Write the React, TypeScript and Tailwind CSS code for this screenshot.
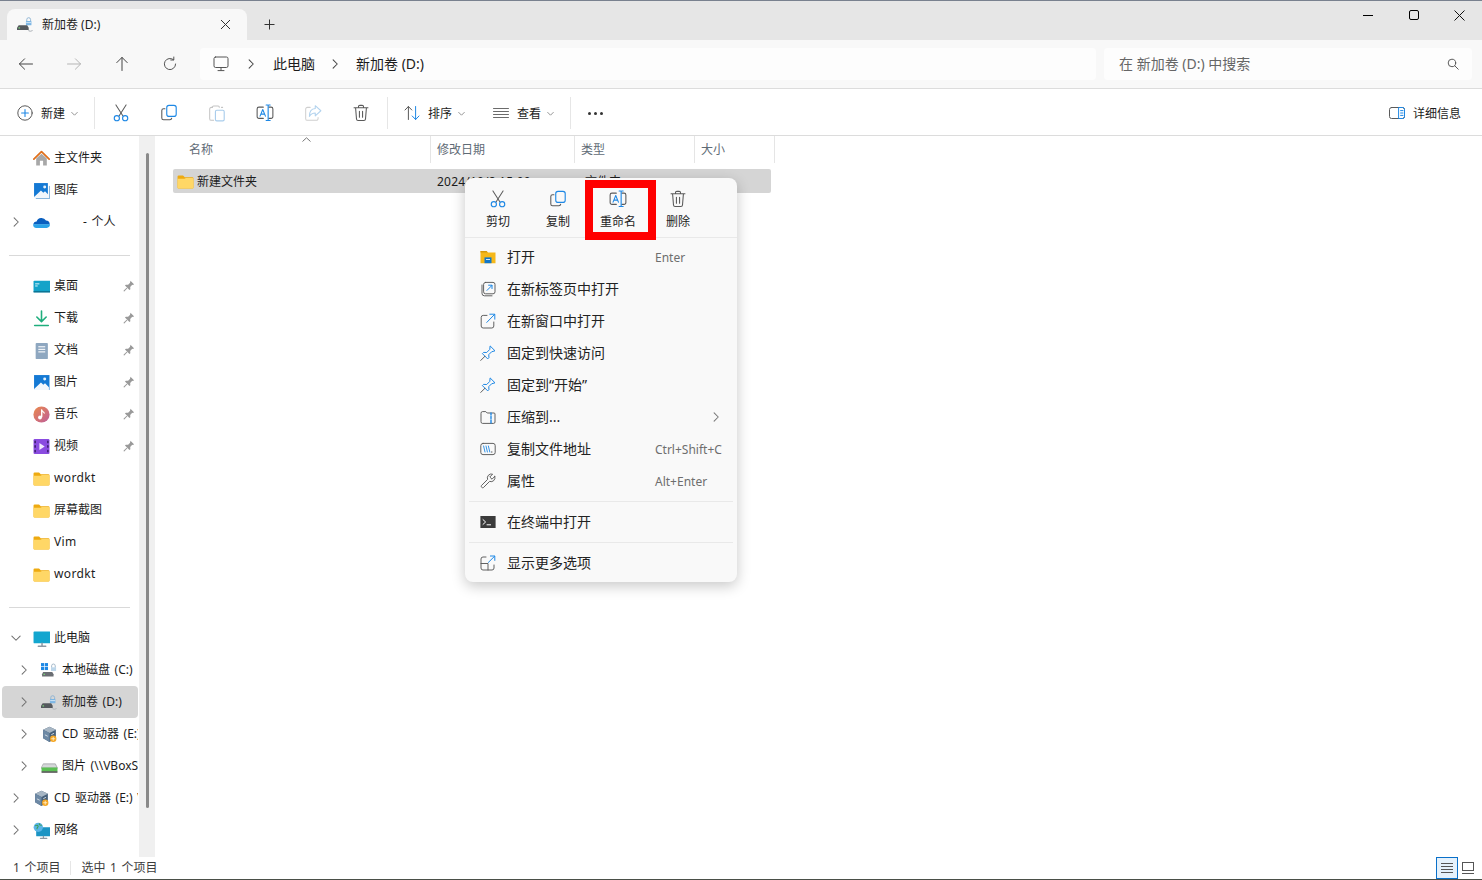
import type { ReactNode } from 'react'

const font = "font-['Noto_Sans','Noto_Sans_CJK_SC',sans-serif]"

function Ico({ s = 16, children, className = '' }: { s?: number; children: ReactNode; className?: string }) {
  return (
    <svg width={s} height={s} viewBox="0 0 16 16" fill="none" strokeLinecap="round" strokeLinejoin="round" className={`shrink-0 ${className}`}>
      {children}
    </svg>
  )
}

const G = '#5a5a5a'
const B = '#1e88e5'

const Chevron = ({ open = false, c = '#6e6e6e' }: { open?: boolean; c?: string }) => (
  <Ico s={12}>
    <path d={open ? 'M2.5 5.5 8 11 13.5 5.5' : 'M5.5 2.5 11 8 5.5 13.5'} stroke={c} strokeWidth="1.4" />
  </Ico>
)
const Caret = () => (
  <Ico s={9}>
    <path d="M3 6 8 11 13 6" stroke="#8a8a8a" strokeWidth="1.6" />
  </Ico>
)

const Cut = ({ s = 18 }: { s?: number }) => (
  <Ico s={s}>
    <path d="M3.5 .8 9.6 10.4M12.5 .8 6.4 10.4" stroke={G} strokeWidth=".9" />
    <circle cx="4.3" cy="12.6" r="2.3" stroke={B} strokeWidth="1" />
    <circle cx="11.7" cy="12.6" r="2.3" stroke={B} strokeWidth="1" />
  </Ico>
)
const Copy = ({ s = 18 }: { s?: number }) => (
  <Ico s={s}>
    <path d="M4.4 4.2H3.2a1.6 1.6 0 0 0-1.6 1.6v6.6A1.6 1.6 0 0 0 3.2 14h5.6a1.6 1.6 0 0 0 1.6-1.4" stroke={G} strokeWidth=".95" />
    <rect x="6" y="1.2" width="8.4" height="9.8" rx="2" stroke={B} strokeWidth="1" />
  </Ico>
)
const Paste = () => (
  <Ico s={18}>
    <path d="M4 3H3a1.5 1.5 0 0 0-1.5 1.5v8.5A1.5 1.5 0 0 0 3 14.5h2M4 3a1 1 0 0 1 1-1.2h4A1 1 0 0 1 10 3M12 3h1" stroke="#c4c4c4" strokeWidth=".9" />
    <rect x="6.6" y="5.6" width="7.8" height="9.4" rx="1.2" stroke="#a9cdec" strokeWidth="1" />
  </Ico>
)
const Rename = ({ s = 18 }: { s?: number }) => (
  <Ico s={s}>
    <path d="M6.5 2.8H2.6A1.6 1.6 0 0 0 1 4.4v6.8a1.6 1.6 0 0 0 1.6 1.6h3.9M11.4 2.8h2A1.6 1.6 0 0 1 15 4.4v6.8a1.6 1.6 0 0 1-1.6 1.6h-2" stroke={G} strokeWidth=".95" />
    <path d="M3.6 10.8 6 4.9l2.4 5.9M4.4 9h3.2" stroke={B} strokeWidth=".95" />
    <path d="M9 .9h1.2a.6.6 0 0 1 .6.6v12.6a.6.6 0 0 1-.6.6H9M12.6.9h-1.2a.6.6 0 0 0-.6.6M12.6 14.7h-1.2a.6.6 0 0 1-.6-.6" stroke={B} strokeWidth="1" />
  </Ico>
)
const Share = () => (
  <Ico s={18}>
    <path d="M5.5 3H3a1.5 1.5 0 0 0-1.5 1.5V13A1.5 1.5 0 0 0 3 14.5h8a1.5 1.5 0 0 0 1.5-1.5v-1" stroke="#cfcfcf" strokeWidth=".9" />
    <path d="M10 1.5 15 6l-5 4.5V8C7.5 8 6 9 4.8 11c0-4 2-6.8 5.2-7Z" stroke="#b3d3ee" strokeWidth=".95" />
  </Ico>
)
const Trash = ({ s = 18 }: { s?: number }) => (
  <Ico s={s}>
    <path d="M1.8 3.4h12.4M5.8 3.2V2.4A1.2 1.2 0 0 1 7 1.2h2a1.2 1.2 0 0 1 1.2 1.2v.8M3.2 3.6l.8 9.8a1.4 1.4 0 0 0 1.4 1.3h5.2a1.4 1.4 0 0 0 1.4-1.3l.8-9.8M6.6 6.4v5.4M9.4 6.4v5.4" stroke={G} strokeWidth=".95" />
  </Ico>
)

const DriveIcon = () => (
  <Ico s={17}>
    <path d="M9.2 5V3.4a1.8 1.8 0 0 1 3.6 0V5" stroke="#8fb4d4" strokeWidth=".9" />
    <rect x="8.4" y="4.8" width="5.2" height="4" rx=".5" fill="#7db6e4" />
    <path d="M9 6.2h4" stroke="#e8f3fb" strokeWidth=".7" />
    <path d="M0 11 1.6 8.8h8l1.4 2.2v2.2H0Z" fill="#55595e" />
    <rect x="1.4" y="10.6" width="1.5" height="1.2" fill="#7ad07a" />
    <path d="M11 13.6c1.2.9 2.4.9 3.4 0" stroke="#b9bdc2" strokeWidth="1" />
  </Ico>
)
const CDrive = () => (
  <Ico s={17}>
    <rect x="0" y="1" width="3" height="3" fill="#1e88e5" />
    <rect x="3.6" y="1" width="3" height="3" fill="#1e88e5" />
    <rect x="0" y="4.6" width="3" height="3" fill="#1e88e5" />
    <rect x="3.6" y="4.6" width="3" height="3" fill="#1e88e5" />
    <path d="M10 5V3.6a1.7 1.7 0 0 1 3.4 0V5" stroke="#9fb4c6" strokeWidth=".9" />
    <rect x="9.4" y="5" width="4.8" height="3.4" fill="#bcd6ea" />
    <path d="M1 11.5 2 9.4h8.6l1.2 2.1v2.2H1Z" fill="#6a6e73" />
    <rect x="2.3" y="11" width="1.5" height="1.2" fill="#7ad07a" />
  </Ico>
)
const VBox = () => (
  <Ico s={17}>
    <path d="M8 .8 14 3.6v8L8 15 2 11.6v-8Z" fill="#47607a" />
    <path d="M8 .8 14 3.6 8 6.6 2 3.6Z" fill="#a7b6c4" />
    <path d="M2 3.6 8 6.6V15L2 11.6Z" fill="#6d89a5" />
    <path d="M4 8.5l2 1M10 8l2-1" stroke="#dfe6ec" strokeWidth=".8" />
    <circle cx="11.5" cy="12" r="3" fill="#f5a623" />
    <path d="M10 12h3M11.5 10.5v3" stroke="#fff1cf" strokeWidth=".8" />
  </Ico>
)
const NetDrive = () => (
  <Ico s={17}>
    <path d="M2.5 5.5h11l2 4H.5Z" fill="#d5d7d9" stroke="#7d7f82" strokeWidth=".5" />
    <rect x=".5" y="9" width="15" height="3.8" rx=".6" fill="#5bbf53" />
    <rect x=".5" y="12.6" width="15" height="1.2" fill="#2f2f2f" />
  </Ico>
)
const Folder = ({ s = 17 }: { s?: number }) => (
  <Ico s={s}>
    <path d="M.5 3.4a1 1 0 0 1 1-1h4.2L7.3 4h7.2a1 1 0 0 1 1 1v8.6a1 1 0 0 1-1 1h-13a1 1 0 0 1-1-1Z" fill="#eeaa10" />
    <path d="M.5 5.4h6.6L8.4 4.6h6.1a1 1 0 0 1 1 1v8a1 1 0 0 1-1 1h-13a1 1 0 0 1-1-1Z" fill="#ffd766" />
  </Ico>
)
const Home = () => (
  <Ico s={17}>
    <path d="M3 8v6.5h3.5V10h3v4.5H13V8L8 3.5Z" fill="#a8a8a8" />
    <path d="M.8 8.5 8 1.5l7.2 7" stroke="#e0701c" strokeWidth="1.7" />
  </Ico>
)
const Pictures = ({ frame = false }: { frame?: boolean }) => (
  <Ico s={17}>
    {frame && <path d="M3 15.5h12.5V4" stroke="#8ab6dc" strokeWidth="1" />}
    <rect x="1" y="1" width={frame ? 13 : 14.5} height={frame ? 13 : 14} fill="#1479d4" />
    <path d="M1 14 7.5 8l2.2 2 1.6-1.2L15 12.5V15H1Z" fill="#f2f7fc" />
    <circle cx="11" cy="4.6" r="1.4" fill="#e4f1fb" />
  </Ico>
)
const OneDrive = () => (
  <Ico s={17}>
    <path d="M3.4 7a4.8 4.8 0 0 1 8.8-.8 3.8 3.8 0 0 1 3.6 3.6H.3A3.2 3.2 0 0 1 3.4 7Z" fill="#0a5fbf" />
    <path d="M.2 9.6h15.7a3.2 3.2 0 0 1-3 3.6H3.2A3 3 0 0 1 .2 9.6Z" fill="#2ba3e8" />
  </Ico>
)
const Desktop = () => (
  <Ico s={17}>
    <rect x=".5" y="2.5" width="16" height="11" rx=".8" fill="#13a3c9" />
    <rect x="2" y="5" width="4" height="1" fill="#cff0f8" />
    <rect x="2" y="7" width="2.4" height="1" fill="#cff0f8" />
    <rect x=".5" y="12.4" width="16" height="1.2" fill="#0b6c8a" />
  </Ico>
)
const Download = () => (
  <Ico s={17}>
    <path d="M8 1v9.5M3.6 6.6 8 11l4.4-4.4" stroke="#1fae7d" strokeWidth="1.5" />
    <path d="M1.6 14.6h12.8" stroke="#1fae7d" strokeWidth="1.5" />
  </Ico>
)
const Docs = () => (
  <Ico s={17}>
    <rect x="2.5" y="1" width="11.5" height="15" rx=".8" fill="#8ea7c0" />
    <rect x="5" y="4" width="6.5" height="1" fill="#fff" />
    <rect x="5" y="6.4" width="6.5" height="1" fill="#fff" />
    <rect x="5" y="8.8" width="6.5" height="1" fill="#fff" />
  </Ico>
)
const Music = () => (
  <Ico s={17}>
    <defs>
      <linearGradient id="mus" x1="0" y1="0" x2="1" y2="1">
        <stop offset="0" stopColor="#ec8a4a" />
        <stop offset="1" stopColor="#bd5d9b" />
      </linearGradient>
    </defs>
    <circle cx="8" cy="8" r="7.6" fill="url(#mus)" />
    <path d="M8.2 3.8v6.4" stroke="#fff" strokeWidth="1.3" />
    <path d="M8.2 3.8c.4 1.6 2 1.6 2.4 3" stroke="#fff" strokeWidth="1" />
    <circle cx="6.6" cy="10.8" r="1.8" fill="#fff" />
  </Ico>
)
const Video = () => (
  <Ico s={17}>
    <rect x=".5" y="1" width="15" height="14" rx="1" fill="#8a4be0" />
    <path d="M6 4.8v6.4L11 8Z" fill="#f1e9fd" />
    <path d="M2 3v1.4M2 7.2v1.4M2 11.6V13M14 3v1.4M14 7.2v1.4M14 11.6V13" stroke="#2a1654" strokeWidth="1.2" />
  </Ico>
)
const ThisPc = () => (
  <Ico s={17}>
    <rect x=".5" y="1.5" width="16" height="11" rx=".8" fill="#13a6cf" />
    <path d="M8.5 12.5v2.4M5 15.2h7" stroke="#8b98a3" strokeWidth="1.4" />
  </Ico>
)
const Net = () => (
  <Ico s={17}>
    <rect x="3" y="5" width="13.5" height="8.5" rx=".6" fill="#1b94c4" />
    <path d="M9.8 13.5v1.6M7 15.4h6" stroke="#8b98a3" strokeWidth="1.2" />
    <circle cx="5" cy="5" r="4.4" fill="#5ab4e6" />
    <path d="M2.4 3.4c1.4-.8 2-.4 2.4.6s-1.4 1.2-1 2.4M6 1.6c-.4 1 .8 1.4 1.8 1.4" stroke="#3ea14f" strokeWidth="1" />
  </Ico>
)
const Pin = () => (
  <Ico s={12}>
    <path d="M10 1 15 6l-3 .8-2.4 2.4.2 3-1.2 1.2L2.6 7.4l1.2-1.2 3 .2 2.4-2.4Z" fill="#9a9a9a" />
    <path d="M5 11 1.5 14.5" stroke="#9a9a9a" strokeWidth="1.4" />
  </Ico>
)

function NavRow({ level = 0, chevron, open, icon, label, pin, selected, extra = 0, wide }: { level?: 0 | 1; chevron?: boolean; open?: boolean; icon: ReactNode; label: string; pin?: boolean; selected?: boolean; extra?: number; wide?: boolean }) {
  return (
    <div className={`h-8 ml-[2px] w-[136px] flex items-center rounded-[4px] overflow-hidden ${selected ? 'bg-[#d5d5d5]' : ''}`}>
      <div className={`shrink-0 flex justify-center ${level === 1 ? 'w-[43px]' : 'w-[27px]'}`}>{chevron && <Chevron open={open} />}</div>
      <div className={`shrink-0 w-[17px] flex justify-center ${level === 1 ? '-ml-[4px]' : 'ml-[4px]'}`}>{icon}</div>
      <span
        className={`ml-[4px] text-[12px] text-[#1c1c1c] whitespace-nowrap [word-spacing:1.5px] ${wide ? 'tracking-[0.35px]' : ''}`}
        style={extra ? { paddingLeft: extra } : undefined}
      >
        {label}
      </span>
      {pin && <span className="ml-auto mr-[3px] flex"><Pin /></span>}
    </div>
  )
}

const Sep = () => <div className="h-px bg-[#d9d9d9] ml-[9px] w-[121px]" />

function CmdBtn({ children }: { children: ReactNode }) {
  return <div className="w-[48px] flex justify-center">{children}</div>
}
const CmdSep = () => <div className="w-px h-[32px] bg-[#e6e6e6]" />
const CmdLabel = ({ children }: { children: ReactNode }) => (
  <span className="ml-[8px] mt-[2px] text-[12px] text-[#1c1c1c]">{children}</span>
)

function MenuItem({ icon, label, shortcut, sub }: { icon: ReactNode; label: string; shortcut?: string; sub?: boolean }) {
  return (
    <div className="h-8 flex items-center pl-[15px]">
      <div className="w-[16px] flex justify-center">{icon}</div>
      <span className="ml-[11px] mb-[2px] w-[148px] text-[14px] text-[#222] whitespace-nowrap">{label}</span>
      {shortcut && <span className="mt-[2px] text-[12px] text-[#6e6e6e] whitespace-nowrap">{shortcut}</span>}
      {sub && <span className="ml-[55px] flex"><Chevron c="#777" /></span>}
    </div>
  )
}

function TopAction({ icon, label }: { icon: ReactNode; label: string }) {
  return (
    <div className="w-[60px] flex flex-col items-center">
      <div className="h-[18px] flex items-center">{icon}</div>
      <span className="mt-[5px] text-[12px] leading-[18px] text-[#222]">{label}</span>
    </div>
  )
}

export default function App() {
  return (
    <div className={`relative w-[1482px] h-[880px] overflow-hidden bg-white flex flex-col ${font}`}>
      {/* 标题栏 */}
      <div className="h-[40px] shrink-0 bg-[#e6e6e6] border-t border-[#79818f] flex items-end pl-[7px]">
        <div className="w-[240px] h-[31px] bg-[#f8f8f8] rounded-t-[8px] flex items-center pl-[10px] pr-[16px]">
          <DriveIcon />
          <span className="ml-[8px] text-[12px] text-[#1c1c1c] leading-none">新加卷 (D:)</span>
          <svg className="ml-auto" width="11" height="11" viewBox="0 0 11 11"><path d="M1 1l9 9M10 1l-9 9" stroke="#333" strokeWidth="1" /></svg>
        </div>
        <div className="h-[31px] flex items-center ml-[17px]">
          <svg width="11" height="11" viewBox="0 0 11 11"><path d="M5.5 .5v10M.5 5.5h10" stroke="#333" strokeWidth="1" /></svg>
        </div>
        <div className="ml-auto self-stretch flex items-start pt-[9px]">
          <div className="w-[46px] h-[10px] flex items-center justify-center"><div className="w-[10px] h-px bg-black" /></div>
          <div className="w-[46px] h-[10px] flex items-center justify-center"><div className="w-[10px] h-[10px] border border-black rounded-[2px]" /></div>
          <div className="w-[45px] h-[10px] flex items-center justify-center">
            <svg width="11" height="11" viewBox="0 0 11 11"><path d="M.5.5l10 10M10.5.5l-10 10" stroke="#111" strokeWidth="1" /></svg>
          </div>
        </div>
      </div>

      {/* 地址栏 */}
      <div className="h-[49px] shrink-0 bg-[#f8f8f8] border-b border-[#dcdcdc] flex items-center pb-[1px]">
        <div className="w-[2px]" />
        <div className="w-[48px] flex justify-center">
          <Ico><path d="M14.5 8h-13M6.6 2.8 1.4 8l5.2 5.2" stroke="#444" strokeWidth="1" /></Ico>
        </div>
        <div className="w-[48px] flex justify-center">
          <Ico><path d="M1.5 8h13M9.4 2.8 14.6 8l-5.2 5.2" stroke="#b5b5b5" strokeWidth="1" /></Ico>
        </div>
        <div className="w-[48px] flex justify-center">
          <Ico><path d="M8 14.5v-13M2.8 6.6 8 1.4l5.2 5.2" stroke="#444" strokeWidth="1" /></Ico>
        </div>
        <div className="w-[48px] flex justify-center">
          <Ico><path d="M13.6 8a5.6 5.6 0 1 1-1.9-4.2M11.8 1v3h-3" stroke="#555" strokeWidth="1" /></Ico>
        </div>
        <div className="w-[6px]" />
        <div className="w-[896px] h-[32px] bg-[#fdfdfd] rounded-[4px] flex items-center pl-[13px]">
          <Ico s={16}>
            <rect x="1" y="1" width="14" height="10.5" rx="1.6" stroke="#555" strokeWidth="1" />
            <path d="M8 11.5v2.8M5 14.6h6" stroke="#555" strokeWidth="1" />
          </Ico>
          <span className="ml-[16px] flex"><Chevron c="#444" /></span>
          <span className="ml-[16px] text-[14px] text-[#1c1c1c]">此电脑</span>
          <span className="ml-[14px] flex"><Chevron c="#444" /></span>
          <span className="ml-[15px] text-[14px] text-[#1c1c1c]">新加卷 (D:)</span>
        </div>
        <div className="w-[8px]" />
        <div className="w-[368px] h-[32px] bg-[#fdfdfd] rounded-[4px] flex items-center pl-[15px] pr-[13px]">
          <span className="text-[14px] text-[#666]">在 新加卷 (D:) 中搜索</span>
          <Ico s={12} className="ml-auto">
            <circle cx="6.6" cy="6.6" r="5" stroke="#555" strokeWidth="1.3" />
            <path d="M10.4 10.4 15 15" stroke="#555" strokeWidth="1.3" />
          </Ico>
        </div>
      </div>

      {/* 命令栏 */}
      <div className="h-[47px] shrink-0 bg-white border-b border-[#dcdcdc] flex items-center pt-[2px] pl-[17px] pr-[21px]">
        <Ico>
          <circle cx="8" cy="8" r="7.2" stroke={G} strokeWidth="1" />
          <path d="M8 4.6v6.8M4.6 8h6.8" stroke={B} strokeWidth="1.1" />
        </Ico>
        <CmdLabel>新建</CmdLabel>
        <span className="ml-[5px] flex"><Caret /></span>
        <div className="ml-[15px]"><CmdSep /></div>
        <div className="w-[2px]" />
        <CmdBtn><Cut /></CmdBtn>
        <CmdBtn><Copy /></CmdBtn>
        <CmdBtn><Paste /></CmdBtn>
        <CmdBtn><Rename /></CmdBtn>
        <CmdBtn><Share /></CmdBtn>
        <CmdBtn><Trash /></CmdBtn>
        <div className="ml-[2px]"><CmdSep /></div>
        <div className="ml-[16px]">
          <Ico>
            <path d="M4.4 14.5v-13M1 5l3.4-3.5L7.8 5" stroke={G} strokeWidth="1" />
            <path d="M11.6 1.5v13M8.2 11l3.4 3.5L15 11" stroke={B} strokeWidth="1" />
          </Ico>
        </div>
        <CmdLabel>排序</CmdLabel>
        <span className="ml-[5px] flex"><Caret /></span>
        <div className="ml-[27px]">
          <Ico>
            <path d="M.5 3.5h15M.5 6.5h15M.5 9.5h15M.5 12.5h15" stroke={G} strokeWidth=".9" />
          </Ico>
        </div>
        <CmdLabel>查看</CmdLabel>
        <span className="ml-[5px] flex"><Caret /></span>
        <div className="ml-[15px]"><CmdSep /></div>
        <div className="ml-[17px] flex gap-[3px]">
          <div className="w-[3px] h-[3px] rounded-full bg-[#333]" />
          <div className="w-[3px] h-[3px] rounded-full bg-[#333]" />
          <div className="w-[3px] h-[3px] rounded-full bg-[#333]" />
        </div>
        <div className="ml-auto flex items-center">
          <Ico>
            <rect x=".5" y="2.5" width="15" height="11" rx="2" stroke={G} strokeWidth="1" />
            <path d="M10 2.5h3.5a2 2 0 0 1 2 2v7a2 2 0 0 1-2 2H10ZM11.6 5.6h2.4M11.6 8h2.4M11.6 10.4h2.4" stroke={B} strokeWidth="1" />
          </Ico>
          <CmdLabel>详细信息</CmdLabel>
        </div>
      </div>

      {/* 主体 */}
      <div className="flex-1 min-h-0 flex">
        <aside className="w-[139px] shrink-0 pt-[6px]">
          <NavRow icon={<Home />} label="主文件夹" />
          <NavRow icon={<Pictures frame />} label="图库" />
          <NavRow chevron icon={<OneDrive />} label="- 个人" extra={29} />
          <div className="pt-[17px] pb-[14px]"><Sep /></div>
          <NavRow icon={<Desktop />} label="桌面" pin />
          <NavRow icon={<Download />} label="下载" pin />
          <NavRow icon={<Docs />} label="文档" pin />
          <NavRow icon={<Pictures />} label="图片" pin />
          <NavRow icon={<Music />} label="音乐" pin />
          <NavRow icon={<Video />} label="视频" pin />
          <NavRow icon={<Folder />} label="wordkt" wide />
          <NavRow icon={<Folder />} label="屏幕截图" />
          <NavRow icon={<Folder />} label="Vim" wide />
          <NavRow icon={<Folder />} label="wordkt" wide />
          <div className="pt-[17px] pb-[14px]"><Sep /></div>
          <NavRow chevron open icon={<ThisPc />} label="此电脑" />
          <NavRow level={1} chevron icon={<CDrive />} label="本地磁盘 (C:)" />
          <NavRow level={1} chevron selected icon={<DriveIcon />} label="新加卷 (D:)" />
          <NavRow level={1} chevron icon={<VBox />} label="CD 驱动器 (E:) VirtualBox" />
          <NavRow level={1} chevron icon={<NetDrive />} label="图片 (\\VBoxSvr) (Z:)" />
          <NavRow chevron icon={<VBox />} label="CD 驱动器 (E:) VirtualBox" />
          <NavRow chevron icon={<Net />} label="网络" />
        </aside>
        {/* 侧栏滚动条 */}
        <div className="w-[16px] shrink-0 h-[721px] bg-[#f0f0f0] pt-[17px] pl-[7px]">
          <div className="w-[3px] h-[655px] bg-[#8a8a8a] rounded-full" />
        </div>
        <main className="flex-1 min-w-0 pl-[17px]">
          <div className="relative h-[27px] flex text-[12px] text-[#5f6b76]">
            <div className="w-[259px] pl-[17px] flex items-center border-r border-[#e5e5e5]">名称</div>
            <div className="w-[144px] pl-[6px] flex items-center border-r border-[#e5e5e5]">修改日期</div>
            <div className="w-[120px] pl-[6px] flex items-center border-r border-[#e5e5e5]">类型</div>
            <div className="w-[80px] pl-[6px] flex items-center border-r border-[#e5e5e5]">大小</div>
            <svg className="absolute left-[130px] top-[1px]" width="9" height="5" viewBox="0 0 9 5"><path d="M.5 4.5 4.5.8l4 3.7" stroke="#777" strokeWidth="1" fill="none" /></svg>
          </div>
          <div className="ml-[1px] mt-[6px] w-[598px] h-[24px] bg-[#d5d5d5] rounded-[2px] flex items-center text-[12px] text-[#1c1c1c]">
            <div className="w-[24px] flex justify-center"><Folder /></div>
            <span className="w-[240px] pt-[2px]">新建文件夹</span>
            <span className="w-[148px] pt-[2px] tracking-[0.2px]">2024/10/8 15:00</span>
            <span className="pt-[2px]">文件夹</span>
          </div>
        </main>
      </div>

      {/* 状态栏 */}
      <div className="h-[23px] shrink-0 bg-white flex items-center pl-[13px] pr-[7px] text-[12px] text-[#3c3c3c] border-b border-[#4a4f48] [word-spacing:1.5px]">
        <span>1 个项目</span>
        <div className="w-px h-[14px] bg-[#e6e6e6] ml-[10px] mr-[10px]" />
        <span>选中 1 个项目</span>
        <div className="ml-auto flex items-center gap-[4px]">
          <div className="w-[22px] h-[22px] bg-[#e5f1fb] border border-[#0a70c9] flex items-center justify-center">
            <svg width="12" height="10" viewBox="0 0 12 10"><path d="M0 .5h12M0 3.5h12M0 6.5h12M0 9.5h12" stroke="#555" strokeWidth="1" /></svg>
          </div>
          <svg width="13" height="13" viewBox="0 0 13 13"><rect x=".5" y=".5" width="11" height="8" stroke="#555" fill="none" /><path d="M0 11.5h12" stroke="#555" /></svg>
        </div>
      </div>

      {/* 右键菜单 */}
      <div className="absolute left-[465px] top-[178px] w-[272px] h-[404px] bg-[#f9f9f9] rounded-[8px] shadow-[0_4px_14px_rgba(0,0,0,0.22)] flex flex-col">
        <div className="h-[60px] shrink-0 flex pl-[3px] pt-[12px] border-b border-[#e9e9e9]">
          <TopAction icon={<Cut />} label="剪切" />
          <TopAction icon={<Copy />} label="复制" />
          <TopAction icon={<Rename />} label="重命名" />
          <TopAction icon={<Trash />} label="删除" />
        </div>
        <div className="pt-[3px] flex flex-col">
          <MenuItem label="打开" shortcut="Enter" icon={
            <Ico>
              <path d="M.5 2h6l1.4 1.6h7.6v10.6H.5Z" fill="#f5b81a" />
              <path d="M.5 2h6l1.4 1.6H.5Z" fill="#d69a0c" />
              <rect x="4.5" y="8.4" width="7" height="5.8" fill="#1277c9" />
              <rect x="6" y="10" width="4" height="1" fill="#cfe6f7" />
            </Ico>
          } />
          <MenuItem label="在新标签页中打开" icon={
            <Ico>
              <path d="M2 4v8.4A2.4 2.4 0 0 0 4.4 14.8H12" stroke={G} strokeWidth=".95" />
              <rect x="3.6" y="1.4" width="11.4" height="11.4" rx="2" stroke={G} strokeWidth=".95" />
              <path d="M7 9.4 12 4.4M8.6 4.2H12v3.4" stroke={B} strokeWidth="1" />
            </Ico>
          } />
          <MenuItem label="在新窗口中打开" icon={
            <Ico>
              <path d="M7 2.4H3.2a2 2 0 0 0-2 2v8.6a2 2 0 0 0 2 2h8.6a2 2 0 0 0 2-2V9" stroke={G} strokeWidth=".95" />
              <path d="M6.8 9.4 14.6 1.4M9.8 1.2h5v5" stroke={B} strokeWidth="1" />
            </Ico>
          } />
          <MenuItem label="固定到快速访问" icon={
            <Ico>
              <path d="M10.4 1.2 15 5.8l-3.4 1-2.8 2.8.1 3.1-1.2 1.2L2.4 8.6l1.2-1.2 3.1.1L9.5 4.7Z" stroke={B} strokeWidth="1" />
              <path d="M5 11.2.8 15.4" stroke={G} strokeWidth="1" />
            </Ico>
          } />
          <MenuItem label="固定到“开始”" icon={
            <Ico>
              <path d="M10.4 1.2 15 5.8l-3.4 1-2.8 2.8.1 3.1-1.2 1.2L2.4 8.6l1.2-1.2 3.1.1L9.5 4.7Z" stroke={B} strokeWidth="1" />
              <path d="M5 11.2.8 15.4" stroke={G} strokeWidth="1" />
            </Ico>
          } />
          <MenuItem label="压缩到..." sub icon={
            <Ico>
              <path d="M1 4a1.4 1.4 0 0 1 1.4-1.4h3.4L7.2 4H14a1 1 0 0 1 1 1v8a1.4 1.4 0 0 1-1.4 1.4H2.4A1.4 1.4 0 0 1 1 13Z" stroke={G} strokeWidth=".95" />
              <path d="M11 4v2M11 7.5v2M11 11v3" stroke={B} strokeWidth="1.4" />
            </Ico>
          } />
          <MenuItem label="复制文件地址" shortcut="Ctrl+Shift+C" icon={
            <Ico>
              <rect x=".8" y="2.4" width="14.4" height="11.2" rx="2.2" stroke={G} strokeWidth=".95" />
              <path d="M3.6 5 5 11M6 5l1.4 6M8.4 5l1.4 6" stroke={B} strokeWidth=".9" />
              <path d="M11.4 11h.6" stroke={G} strokeWidth="1" />
            </Ico>
          } />
          <MenuItem label="属性" shortcut="Alt+Enter" icon={
            <Ico>
              <path d="M14.8 3.4 12 6.2 9.8 4 12.6 1.2a4 4 0 0 0-5 5.2L1.4 12.6a1.5 1.5 0 0 0 2 2l6.2-6.2a4 4 0 0 0 5.2-5Z" stroke={G} strokeWidth=".95" />
            </Ico>
          } />
          <div className="h-px mx-[4px] my-[4px] bg-[#e9e9e9]" />
          <MenuItem label="在终端中打开" icon={
            <Ico>
              <rect x=".4" y="2" width="15.2" height="12" fill="#3b3b3b" />
              <path d="M3 5.6 5.6 8 3 10.4" stroke="#fff" strokeWidth="1" />
              <path d="M7 10.8h3.6" stroke="#fff" strokeWidth="1" />
            </Ico>
          } />
          <div className="h-px mx-[4px] my-[4px] bg-[#e9e9e9]" />
          <MenuItem label="显示更多选项" icon={
            <Ico>
              <path d="M6 2H3a2 2 0 0 0-2 2v9a2 2 0 0 0 2 2h9a2 2 0 0 0 2-2v-3M1 8.5h7V15" stroke={G} strokeWidth=".95" />
              <path d="M8.4 7.4 14.6 1.2M10.4 1h4.4v4.4" stroke={B} strokeWidth="1" />
            </Ico>
          } />
        </div>
      </div>

      {/* 标注红框 */}
      <div className="absolute left-[585px] top-[180px] w-[71px] h-[60px] border-[8px] border-[#ff0000]" />
    </div>
  )
}
